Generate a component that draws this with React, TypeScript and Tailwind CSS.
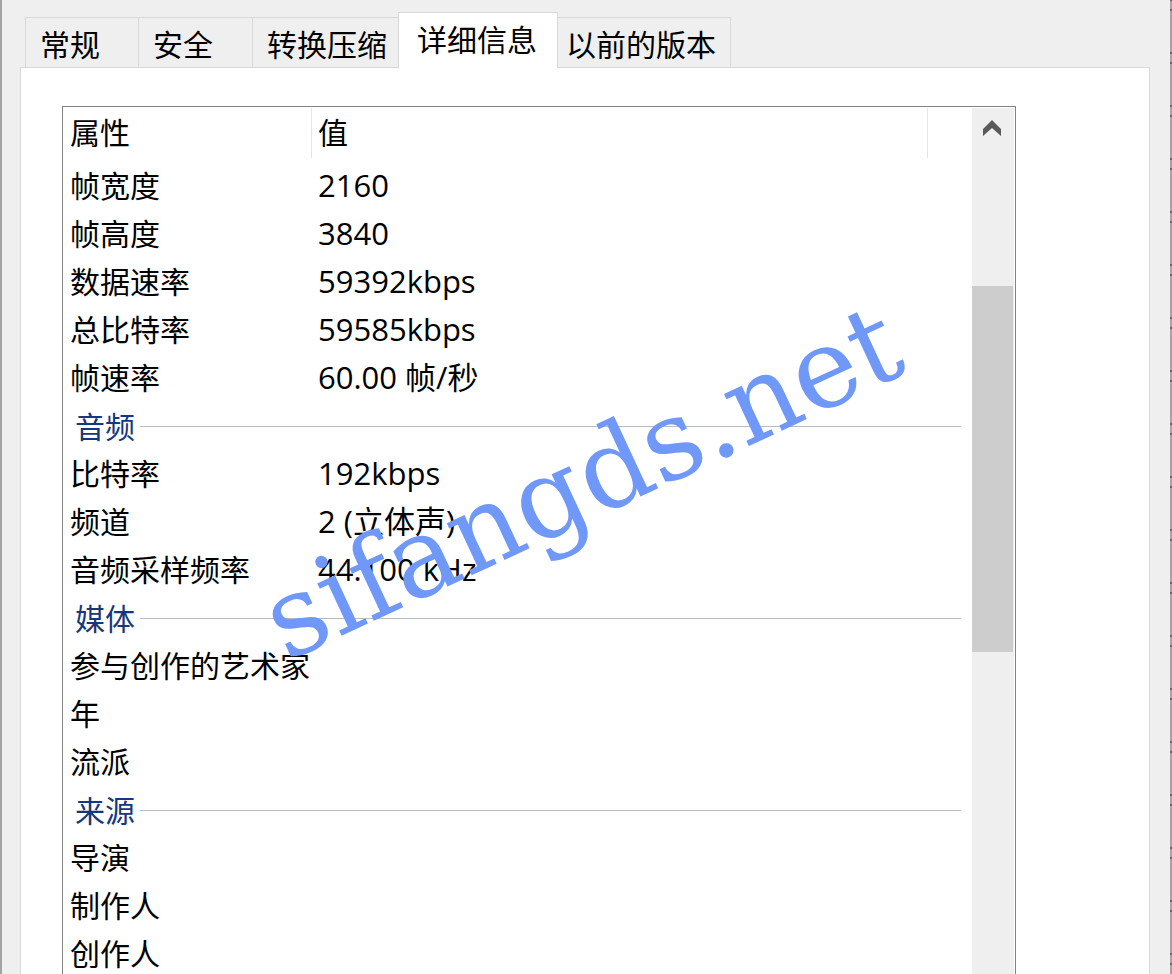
import { useState } from 'react';

type Row = { label: string; value?: string; group?: boolean };

const tabs = [
  { id: 'general', label: '常规', width: 'w-[113px]' },
  { id: 'security', label: '安全', width: 'w-[114px]' },
  { id: 'convert', label: '转换压缩', width: 'w-[146px]' },
  { id: 'details', label: '详细信息', width: 'w-[160px]' },
  { id: 'previous', label: '以前的版本', width: 'w-[173px]' },
];

const rows: Row[] = [
  { label: '帧宽度', value: '2160' },
  { label: '帧高度', value: '3840' },
  { label: '数据速率', value: '59392kbps' },
  { label: '总比特率', value: '59585kbps' },
  { label: '帧速率', value: '60.00 帧/秒' },
  { label: '音频', group: true },
  { label: '比特率', value: '192kbps' },
  { label: '频道', value: '2 (立体声)' },
  { label: '音频采样频率', value: '44.100 kHz' },
  { label: '媒体', group: true },
  { label: '参与创作的艺术家' },
  { label: '年' },
  { label: '流派' },
  { label: '来源', group: true },
  { label: '导演' },
  { label: '制作人' },
  { label: '创作人' },
];

function DetailRow({ row }: { row: Row }) {
  if (row.group) {
    return (
      <tr className="h-12">
        <th colSpan={3} scope="colgroup" className="p-0 pl-3 pr-[11px] font-normal">
          <div className="flex items-center gap-[5px] text-[#14377d]">
            <span className="pt-0.5">{row.label}</span>
            <span className="h-px flex-1 bg-[#b4bdc2]" />
          </div>
        </th>
      </tr>
    );
  }

  return (
    <tr className="h-12">
      <th scope="row" className="p-0 pl-[7px] text-left font-normal">{row.label}</th>
      <td className="p-0 pb-0.5 pl-1.5 text-[31px]">{row.value}</td>
      <td className="p-0" />
    </tr>
  );
}

function Scrollbar() {
  return (
    <div className="mt-px mr-px flex w-[42px] shrink-0 flex-col bg-[#efefef]">
      <button type="button" aria-label="向上滚动" className="flex h-[42px] items-center justify-center pr-0.5 pb-0.5">
        <svg width="18" height="16" viewBox="0 0 18 16" fill="#5a5a5a">
          <path d="M9 0 L18 9 V16 L9 8 L0 16 V9 Z" />
        </svg>
      </button>
      <div className="mt-[136px] mr-px h-[366px] bg-[#cdcdcd]" />
    </div>
  );
}

export default function App() {
  const [activeTab, setActiveTab] = useState('details');

  return (
    <main className="relative flex h-screen w-full overflow-hidden bg-[#efefef] font-['Open_Sans','Noto_Sans_CJK_SC',sans-serif] text-[30px] leading-10 text-black">
      {/* Window edges */}
      <div className="w-0.5 shrink-0 bg-[#a3a3a3]" />

      <div className="flex min-w-0 flex-1 flex-col pt-3 pr-5 pl-[18px]">
        {/* Tabs */}
        <div role="tablist" className="z-10 -mb-px flex items-end pl-[5px]">
          {tabs.map((tab, i) => (
            <button
              key={tab.id}
              type="button"
              role="tab"
              aria-selected={activeTab === tab.id}
              onClick={() => setActiveTab(tab.id)}
              className={`${tab.width} shrink-0 whitespace-nowrap border-t border-[#d9d9d9] text-left ${
                activeTab === tab.id
                  ? 'h-14 border-x bg-white pb-0.5 pl-[18px]'
                  : 'h-[51px] border-b pt-1 ' +
                    (i > 0 && tabs[i - 1].id === activeTab ? 'border-r pl-2' : 'border-l pl-[14px]')
              }`}
            >
              {tab.label}
            </button>
          ))}
        </div>

        {/* Details page */}
        <div role="tabpanel" className="flex min-h-0 flex-1 border-x border-t border-[#d9d9d9] bg-white pt-[38px] pr-[133px] pl-[41px]">
          <div className="flex min-w-0 flex-1 overflow-hidden border-x border-t border-[#828282]">
            <div className="min-w-0 flex-1">
              <table className="w-full table-fixed border-collapse whitespace-nowrap">
                <colgroup>
                  <col className="w-[249px]" />
                  <col />
                  <col className="w-11" />
                </colgroup>
                <thead>
                  <tr className="h-[55px]">
                    <th scope="col" className="p-0 align-top font-normal">
                      <div className="mt-px flex h-[50px] items-center border-r border-[#e5e5e5] pl-[7px]">属性</div>
                    </th>
                    <th scope="col" className="p-0 align-top font-normal">
                      <div className="mt-px flex h-[50px] items-center border-r border-[#e5e5e5] pl-1.5">值</div>
                    </th>
                    <td className="p-0" />
                  </tr>
                </thead>
                <tbody>
                  {rows.map((row) => (
                    <DetailRow key={row.label} row={row} />
                  ))}
                </tbody>
              </table>
            </div>
            <Scrollbar />
          </div>
        </div>
      </div>

      <div className="w-0.5 shrink-0 bg-[repeating-linear-gradient(to_bottom,#666_0px,#666_1px,#a3a3a3_1px,#a3a3a3_9px,#666_9px,#666_11px,#a3a3a3_11px,#a3a3a3_52px,#666_52px,#666_53px)]" />

      {/* Watermark */}
      <div className="pointer-events-none absolute inset-0 z-20 flex items-center justify-center pr-2 pb-3">
        <span className="-rotate-[25deg] font-['DejaVu_Serif',serif] text-[111px] leading-none text-[#6f98f8]">
          sifangds.net
        </span>
      </div>
    </main>
  );
}
